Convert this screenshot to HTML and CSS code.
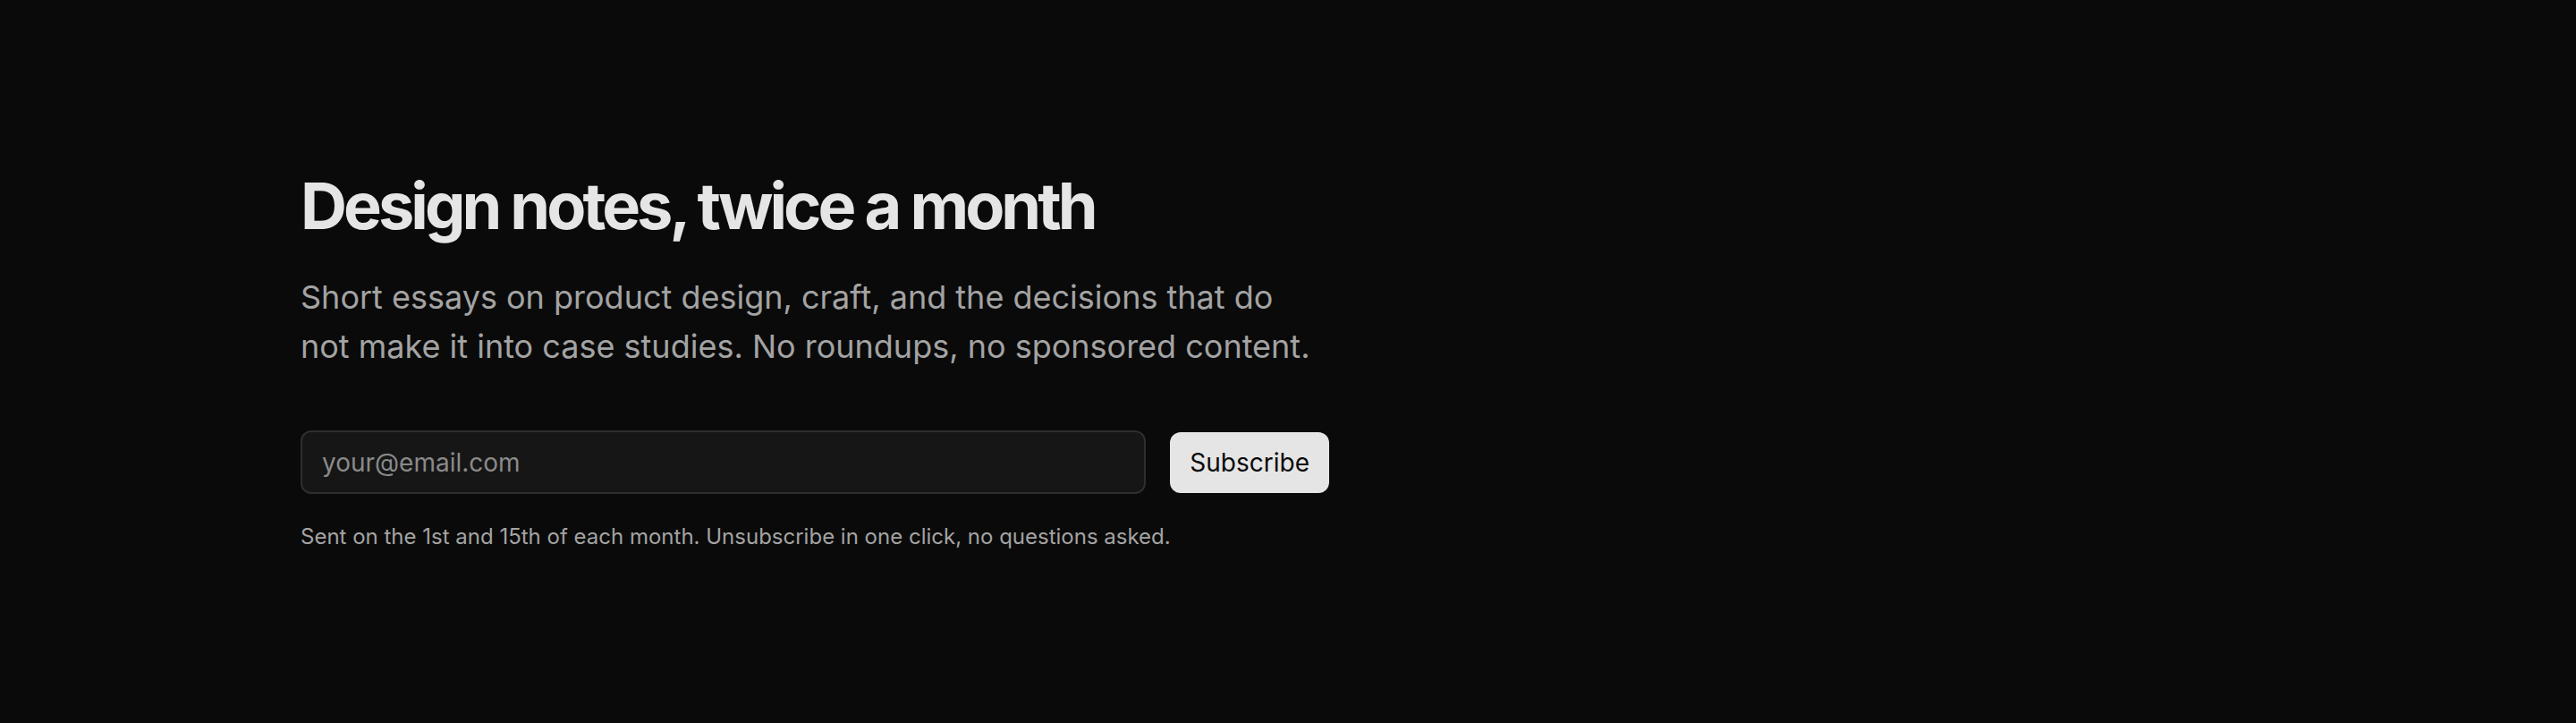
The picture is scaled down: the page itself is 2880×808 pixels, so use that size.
FILE: index.html
```html
<!DOCTYPE html>
<html lang="en">
<head>
  <meta charset="UTF-8">
  <meta name="viewport" content="width=device-width, initial-scale=1.0">
  <title>Newsletter</title>
  <link rel="stylesheet" href="styles.css">
</head>
<body>
  <section class="newsletter">
    <h1>Design notes, twice a month</h1>
    <p class="lead">Short essays on product design, craft, and the decisions that do not make it into case studies. No roundups, no sponsored content.</p>

    <form class="signup" onsubmit="return false;">
      <input type="email" placeholder="your@email.com" aria-label="Email address">
      <button type="submit">Subscribe</button>
    </form>

    <p class="fine-print">Sent on the 1st and 15th of each month. Unsubscribe in one click, no questions asked.</p>
  </section>
</body>
</html>
```

FILE: styles.css
```css
* {
  margin: 0;
  padding: 0;
  box-sizing: border-box;
  font-family: 'Inter', 'Liberation Sans', sans-serif;
}

body {
  background-color: #0a0a0a;
  min-height: 100vh;
}

.newsletter {
  padding: 190px 336px;
}

.newsletter h1 {
  color: #e5e5e5;
  font-size: 72px;
  font-weight: 700;
  line-height: 1.1;
  letter-spacing: -0.055em;
}

.lead {
  margin-top: 36px;
  max-width: 1150px;
  color: #a3a3a3;
  font-size: 36px;
  line-height: 55px;
}

.signup {
  display: flex;
  align-items: center;
  gap: 27px;
  max-width: 1150px;
  margin-top: 66px;
}

.signup input {
  flex: 1;
  height: 71px;
  padding: 0 22px;
  background-color: #161616;
  border: 2px solid #2e2e2e;
  border-radius: 12px;
  color: #e5e5e5;
  font-size: 28px;
  outline: none;
}

.signup input::placeholder {
  color: #8a8a8a;
}

.signup button {
  height: 68px;
  padding: 0 22px;
  background-color: #e5e5e5;
  color: #0a0a0a;
  border: none;
  border-radius: 12px;
  font-size: 28px;
  cursor: pointer;
}

.fine-print {
  margin-top: 30px;
  color: #a3a3a3;
  font-size: 24px;
  line-height: 1.5;
}
```
